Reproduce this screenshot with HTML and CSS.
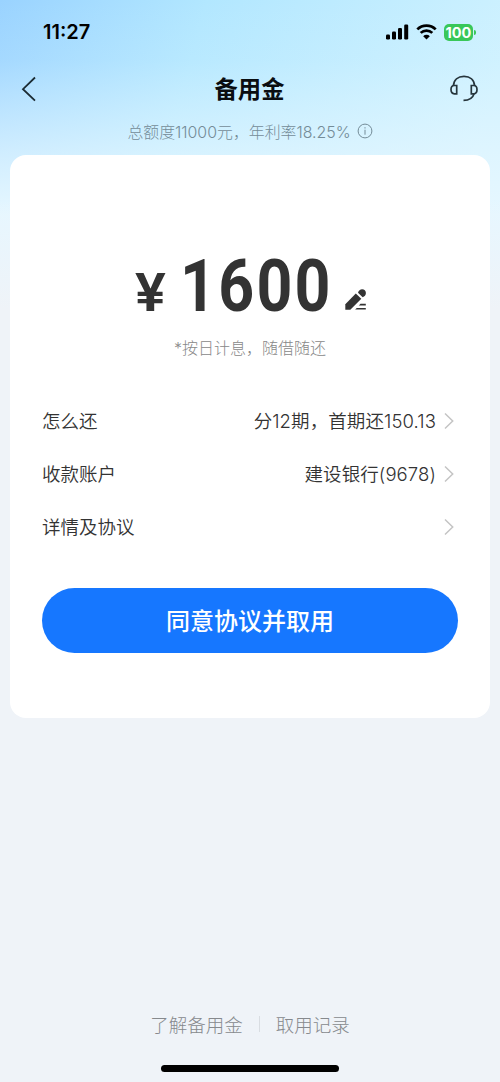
FILE: index.html
```html
<!DOCTYPE html>
<html lang="zh-CN">
<head>
<meta charset="utf-8">
<meta name="viewport" content="width=device-width, initial-scale=1">
<title>备用金</title>
<link rel="stylesheet" href="styles.css">
</head>
<body>
<div class="screen">
  <div class="status">
    <span class="time">11:27</span>
    <div class="status-icons">
      <svg width="23" height="16" viewBox="0 0 23 16"><rect x="0" y="10.500" width="4" height="5" rx="1.200"/><rect x="6" y="7.500" width="4" height="8" rx="1.200"/><rect x="12" y="4" width="4" height="11.500" rx="1.200"/><rect x="18.200" y="0.500" width="4" height="15" rx="1.200"/></svg>
      <svg class="wifi" width="21" height="16" viewBox="0 0 21 16"><path d="M1.300 5.400a13.100 13.100 0 0 1 18.400 0M4.700 8.900a8.300 8.300 0 0 1 11.600 0" fill="none" stroke="#000" stroke-width="2.700"/><path d="M10.500 15.500l-3.300-3.300a4.700 4.700 0 0 1 6.600 0z"/></svg>
      <span class="battery">100</span><span class="battery-tip"></span>
    </div>
  </div>
  <header class="nav">
    <svg class="back" width="16" height="26" viewBox="0 0 16 26"><path d="M14 1.500L2 13.200L14 24.700" fill="none" stroke="#1b2b33" stroke-width="1.800"/></svg>
    <h1 class="title">备用金</h1>
    <svg class="headset" width="28" height="27" viewBox="0 0 28 27" fill="none" stroke="#26353c" stroke-width="1.700"><path d="M3.400 11C3.700 4.800 8 1.300 14 1.300S24.300 4.800 24.600 11M24.200 18.500c-1.400 4.700-4.700 6.900-10.700 6.900"/><path d="M6.700 10.500v8.300H4.300C2.200 18.800 1 17.100 1 14.600s1.200-4.100 3.300-4.100zM21.300 10.500v8.300h2.400c2.100 0 3.300-1.700 3.300-4.200s-1.200-4.100-3.300-4.100z"/></svg>
  </header>
  <div class="quota">
    <span>总额度11000元，年利率18.25%</span>
    <svg width="16" height="16" viewBox="0 0 16 16" fill="none" stroke="#748c98"><circle cx="8" cy="8" r="6.900"/><path d="M8 6.700v5M8 4.200v1.300"/></svg>
  </div>
  <main class="card">
    <div class="amount">
      <span class="yen">¥</span><span class="number">1600</span>
      <svg width="22" height="22" viewBox="0 0 22 22" fill="#333"><path d="M0.300 20.800V15.200L10.800 4.500L16.300 9.800L5.300 20.800z"/><path d="M13 3.800C13.600 1.600 15.200.3 17.100.3C19.300.3 20.900 1.900 20.900 4C20.900 6.100 19.500 7.600 17.700 8.200z"/><path d="M15.500 14.800h5.300v1.600h-7zM11.800 18.900h9v1.700H10.100z"/></svg>
    </div>
    <p class="hint">*按日计息，随借随还</p>
    <div class="rows">
      <div class="row"><span>怎么还</span><span class="value">分12期，首期还150.13</span><svg class="chevron" width="10" height="18" viewBox="0 0 10 18"><path d="M1 1.500L8.700 9L1 16.500"/></svg></div>
      <div class="row"><span>收款账户</span><span class="value">建设银行(9678)</span><svg class="chevron" width="10" height="18" viewBox="0 0 10 18"><path d="M1 1.500L8.700 9L1 16.500"/></svg></div>
      <div class="row"><span>详情及协议</span><span class="value"></span><svg class="chevron" width="10" height="18" viewBox="0 0 10 18"><path d="M1 1.500L8.700 9L1 16.500"/></svg></div>
    </div>
    <button class="submit">同意协议并取用</button>
  </main>
  <footer class="footer">
    <div class="links"><span>了解备用金</span><i class="divider"></i><span>取用记录</span></div>
    <div class="home-bar"></div>
  </footer>
</div>
</body>
</html>
```

FILE: styles.css
```css
* { box-sizing: border-box; }
body { margin: 0; font-family: Inter, "Noto Sans CJK SC", sans-serif; color: #333; }
svg { display: block; flex: none; }
.screen {
  width: 500px; height: 1082px; display: flex; flex-direction: column;
  background:
    linear-gradient(180deg, rgba(239,243,248,0) 200px, #eff3f8 310px),
    linear-gradient(180deg, rgba(230,247,255,0) 0, rgba(230,247,255,.12) 60px, rgba(230,247,255,.7) 155px, #e6f7ff 215px),
    linear-gradient(105deg, #9ad3ff 0, #b2e7ff 200px, #cdf1ff 500px);
}
.status { height: 64px; padding: 0 24px 0 43px; display: flex; align-items: center; justify-content: space-between; color: #000; }
.time { font-size: 20px; font-weight: 600; }
.status-icons { display: flex; align-items: center; }
.wifi { margin-left: 7px; }
.battery { margin-left: 7px; width: 29px; height: 17px; border-radius: 5px; background: #39c759; color: #fff; font-size: 14.5px; line-height: 17px; font-weight: 700; text-align: center; }
.battery-tip { width: 2px; height: 5px; margin-left: 1px; border-radius: 0 2px 2px 0; background: #39c759; }
.nav { height: 49px; padding: 0 22px 0 21px; display: flex; align-items: center; justify-content: space-between; }
.title { margin: 2px 0 0 12px; font-size: 23.3px; line-height: 34px; font-weight: 700; color: #0a0d10; }
.quota { height: 42px; padding-bottom: 6px; display: flex; justify-content: center; align-items: center; gap: 6px; font-size: 15.9px; font-weight: 300; color: #748c98; }
.card { height: 563px; margin: 0 10px; padding: 102px 32px 0; border-radius: 16px; background: #fff; }
.amount { height: 60px; padding-left: 93px; display: flex; align-items: baseline; font-family: Roboto, sans-serif; font-weight: 700; line-height: 60px; }
.amount svg { margin-bottom: -1px; }
.yen { width: 45px; font-size: 54px; font-weight: 600; transform: scaleX(1.07); transform-origin: left; }
.number { width: 165px; font-size: 72px; font-weight: 700; letter-spacing: 2.6px; transform: scaleX(.87); transform-origin: left; }
.hint { margin: 18px 0 0; text-align: center; font-size: 16px; line-height: 26px; font-weight: 300; color: #888; }
.rows { margin-top: 33px; }
.row { height: 53px; padding-right: 4px; display: flex; align-items: center; font-size: 18.5px; font-weight: 350; }
.row span { position: relative; top: -1px; }
.row .value { margin-left: auto; margin-right: 8px; letter-spacing: .1px; }
.chevron { fill: none; stroke: #c4c4c4; stroke-width: 1.5; }
.submit { display: block; width: 100%; height: 65px; margin-top: 35px; padding: 2px 0 0; border: 0; border-radius: 33px; background: #1677ff; color: #fff; font: 500 24px/63px Inter, "Noto Sans CJK SC", sans-serif; }
.footer { margin-top: auto; height: 75px; display: flex; flex-direction: column; align-items: center; }
.links { height: 34px; display: flex; align-items: center; font-size: 18.5px; font-weight: 300; color: #86898d; }
.divider { width: 1px; height: 16px; margin: 0 16px; background: #d9dde2; }
.home-bar { width: 178px; height: 7px; margin-top: 24px; border-radius: 4px; background: #000; }
```
